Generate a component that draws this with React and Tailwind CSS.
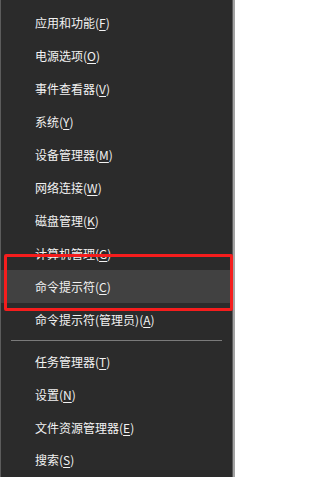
import React from "react";

const groupA = [
  ["应用和功能", "F"],
  ["电源选项", "O"],
  ["事件查看器", "V"],
  ["系统", "Y"],
  ["设备管理器", "M"],
  ["网络连接", "W"],
  ["磁盘管理", "K"],
  ["计算机管理", "G"],
  ["命令提示符", "C", true],
  ["命令提示符(管理员)", "A"],
];
const groupB = [
  ["任务管理器", "T"],
  ["设置", "N"],
  ["文件资源管理器", "E"],
  ["搜索", "S"],
];

function Item({ label, k, active }) {
  return (
    <div
      className={
        "h-[33px] flex items-center pl-[34px] text-[12px] leading-none text-[#f2f2f2] " +
        (active ? "bg-[#414141]" : "")
      }
    >
      <span>
        {label}(<span className="underline underline-offset-2">{k}</span>)
      </span>
    </div>
  );
}

export default function App() {
  return (
    <div
      className="relative flex h-[477px] w-[235px] overflow-hidden bg-[#a3a3a3]"
      style={{ fontFamily: '"Noto Sans CJK SC", "Noto Sans", sans-serif' }}
    >
      <div className="flex w-[233px] flex-col border-l border-r border-l-[#5c5c5c] border-r-[#5a5a5a] bg-[#2b2b2b] pt-[7px]">
        {groupA.map(([l, k, a]) => (
          <Item key={l} label={l} k={k} active={a} />
        ))}
        <div className="mx-[10px] my-[4px] h-px bg-[#7a7a7a]" />
        {groupB.map(([l, k]) => (
          <Item key={l} label={l} k={k} />
        ))}
      </div>
      <div className="absolute left-[4px] top-[254px] h-[57px] w-[229px] rounded-[2px] border-[3px] border-[#f51d1d]" />
    </div>
  );
}
